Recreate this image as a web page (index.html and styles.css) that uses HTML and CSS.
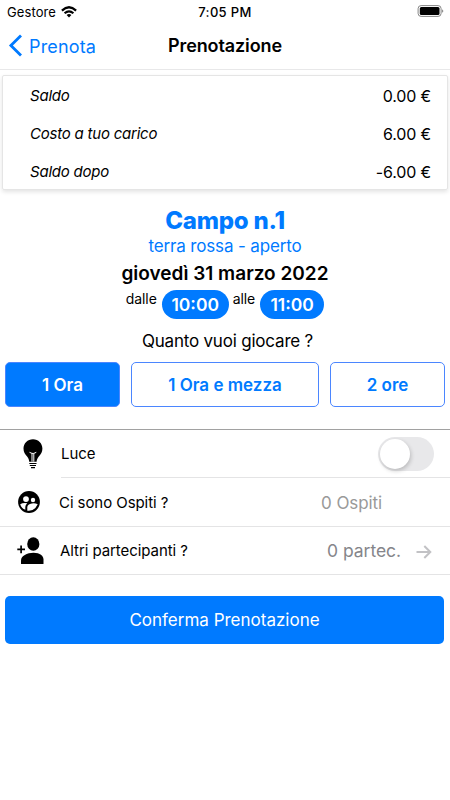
FILE: index.html
```html
<!DOCTYPE html>
<html lang="it">
<head>
<meta charset="utf-8">
<title>Prenotazione</title>
<link rel="stylesheet" href="styles.css">
</head>
<body>
<div class="status">
  <div class="carrier"><span>Gestore</span>
    <svg width="16" height="12" viewBox="0 0 16 12"><g fill="none" stroke="#000" stroke-width="2.2"><path d="M.9 4.6Q8-2.1 15.1 4.6"/><path d="M3.6 7.3Q8 3.3 12.4 7.3"/></g><path d="M5.6 9Q8 7.1 10.4 9L8 11.5Z"/></svg>
  </div>
  <div class="clock">7:05 PM</div>
  <div class="battery">
    <svg width="27" height="12" viewBox="0 0 27 12"><rect x="1.1" y=".6" width="23" height="10.8" rx="3" fill="#fff" stroke="#858585"/><rect x="2.8" y="2" width="19.7" height="8" rx="1.5"/><path d="M25.2 4.2Q27.4 6 25.2 7.8Z" fill="#777"/></svg>
  </div>
</div>
<header class="nav">
  <a class="back"><svg width="14" height="23" viewBox="0 0 14 23"><path d="M13 1.4 2.9 11.5 13 21.6" fill="none" stroke="#007aff" stroke-width="2.8"/></svg><span>Prenota</span></a>
  <h1>Prenotazione</h1>
</header>
<section class="card">
  <div class="line"><i>Saldo</i><span>0.00 €</span></div>
  <div class="line"><i>Costo a tuo carico</i><span>6.00 €</span></div>
  <div class="line"><i>Saldo dopo</i><span>-6.00 €</span></div>
</section>
<section class="booking">
  <h2>Campo n.1</h2>
  <div class="surface">terra rossa - aperto</div>
  <div class="date">giovedì 31 marzo 2022</div>
  <div class="times"><span>dalle</span><b class="from">10:00</b><span>alle</span><b class="to">11:00</b></div>
  <div class="question">Quanto vuoi giocare ?</div>
</section>
<div class="durations">
  <button class="active">1 Ora</button><button>1 Ora e mezza</button><button>2 ore</button>
</div>
<section class="options">
  <div class="row light">
    <div class="icon"><svg width="20" height="30" viewBox="0 0 20 30"><path d="M10 .2C4.600.2.5 4.300.5 9.500.5 13 2 15.300 4.100 17.400 5.500 18.900 6 20.500 6.200 22.700H13.600C13.800 20.500 14.500 18.900 15.800 17.400 17.900 15.300 19.400 13 19.400 9.500 19.400 4.300 15.300.2 10 .2Z"/><path d="M6.500 13.300 9 14.400V22.700M13.300 13.300 10.800 14.400V22.700M9 14.400H10.800" fill="none" stroke="#fff" stroke-width="1"/><path d="M6.300 24.500H13.500M6.800 26.500H13M8 28.600H12" stroke="#000" stroke-width="1.200"/></svg></div>
    <div class="body"><span class="label">Luce</span><div class="toggle"><div class="knob"></div></div></div>
  </div>
  <div class="row guests">
    <div class="icon"><svg width="22" height="22" viewBox="0 0 22 22"><circle cx="11" cy="11" r="10.900"/><g fill="#fff"><circle cx="8" cy="8.100" r="2.900"/><circle cx="15" cy="9" r="2.200"/><path d="M2.200 13.200Q5 11.600 9.300 12.300 7.300 13.800 7.300 16V18.800Q3.500 17.300 2.200 13.200Z"/><path d="M19.700 13.300Q17 11.900 13.800 12.500 9.600 13.200 9.300 16V19.700Q16.500 20.600 19.700 13.300Z"/></g></svg></div>
    <div class="body"><span class="label">Ci sono Ospiti ?</span><span class="value">0 Ospiti</span></div>
  </div>
  <div class="row people">
    <div class="icon"><svg width="27" height="28" viewBox="0 0 27 28"><ellipse cx="16.300" cy="7" rx="6.100" ry="6.700"/><path d="M4 26.700V23.500C4 19 10 15.800 16.500 15.800S26.500 19 26.500 22.500V26.700Q26.500 27 26 27H4.500Q4 27 4 26.700Z"/><path d="M.3 12.400H8M4.100 8.500V16.300" stroke="#000" stroke-width="1.700"/></svg></div>
    <div class="body"><span class="label">Altri partecipanti ?</span><span class="value">0 partec.</span><svg class="arrow" width="16" height="14" viewBox="0 0 16 14"><path d="M.5 7H14.500M8.300 1 14.300 7 8.300 13" fill="none" stroke="#c2c2c5" stroke-width="2"/></svg></div>
  </div>
</section>
<button class="confirm">Conferma Prenotazione</button>
</body>
</html>
```

FILE: styles.css
```css
* { box-sizing: border-box; }
body { margin: 0; width: 450px; height: 800px; overflow: hidden; background: #fff; color: #000; font-family: Inter, "Liberation Sans", sans-serif; font-weight: 400; }
svg { display: block; flex: none; }
button { font-family: inherit; }
h1, h2 { margin: 0; }
.status { height: 23px; display: grid; grid-template-columns: 1fr 1fr 1fr; align-items: center; font-size: 13px; }
.carrier { display: flex; align-items: center; gap: 5px; padding-left: 7px; letter-spacing: .1px; }
.clock { text-align: center; font-weight: 500; letter-spacing: .35px; }
.battery { display: flex; justify-content: flex-end; padding: 0 6px 2px 0; }
.nav { height: 47px; border-bottom: 1px solid #e8e8e9; display: grid; grid-template-columns: 120px 1fr 120px; align-items: center; text-align: center; }
.nav svg { margin-top: -1px; }
.back { display: flex; align-items: center; gap: 7px; padding-left: 8px; color: #007aff; font-size: 18px; letter-spacing: .15px; }
.nav h1 { font-size: 18px; font-weight: 600; white-space: nowrap; padding-bottom: 2px; letter-spacing: -.12px; }
.card { margin: 5px 2px 0; height: 115px; border: 1px solid #e5e5e5; border-radius: 2px; box-shadow: 0 2px 4px rgba(0,0,0,.11); padding: 0 16px 0 27px; }
.line { height: 38px; display: flex; align-items: center; justify-content: space-between; font-size: 16px; }
.line i { font-size: 15px; letter-spacing: -.22px; }
.line span { padding-top: 2px; letter-spacing: -.15px; }
.booking { display: flex; flex-direction: column; align-items: center; padding-top: 16px; white-space: nowrap; }
.booking h2 { color: #007aff; font-size: 24px; line-height: 30px; font-weight: 800; letter-spacing: -.25px; }
.surface { color: #007aff; font-size: 17px; line-height: 20px; letter-spacing: -.15px; }
.date { font-size: 19px; line-height: 34px; font-weight: 600; letter-spacing: 0; padding-top: 1px; margin-bottom: -1px; }
.times { height: 30px; display: flex; font-size: 14px; line-height: 18px; }
.times > span { letter-spacing: -.1px; }
.times b { height: 29px; line-height: 29px; border-radius: 15px; background: #007aff; color: #fff; text-align: center; font-size: 17.500px; font-weight: 600; }
.from { width: 67px; margin: 0 4px 0 5px; }
.to { width: 64px; margin-left: 5px; }
.question { font-size: 17px; line-height: 42px; letter-spacing: -.2px; padding-left: 5px; }
.durations { display: grid; grid-template-columns: 115px 188px 115px; gap: 11px; padding: 0 5px; height: 45px; }
.durations button { border: 1px solid #4b86ff; border-radius: 5px; background: #fff; color: #007aff; font-size: 17px; font-weight: 600; padding: 0; }
.durations .active { background: #007aff; color: #fff; }
.options { margin-top: 22px; border-top: 1px solid #a1a1a1; }
.row { display: flex; height: 48px; }
.icon { width: 61px; display: flex; align-items: center; }
.body { flex: 1; display: flex; align-items: center; }
.label { font-size: 15px; letter-spacing: -.07px; }
.light .icon { padding-left: 22.500px; padding-bottom: 1px; }
.light .body { border-bottom: 1px solid #e4e4e5; justify-content: space-between; padding-right: 16px; }
.guests { height: 49px; border-bottom: 1px solid #e4e4e5; }
.guests .icon, .people .icon { width: 59px; padding-left: 18px; }
.guests .body { padding-top: 1px; }
.people { border-bottom: 1px solid #e4e4e5; }
.people .icon { width: 60px; padding-left: 17px; }
.value { margin-left: auto; font-size: 17px; color: #999; }
.guests .value { margin-right: 68px; letter-spacing: -.1px; }
.people .value { color: #85858a; font-size: 17.500px; letter-spacing: -.05px; }
.arrow { margin: 2px 18px 0 15px; }
.toggle { width: 56px; height: 34px; border-radius: 17px; background: #e8e8ea; padding: 2px; }
.knob { width: 30px; height: 30px; border-radius: 50%; background: #fff; box-shadow: 1px 2px 4px rgba(0,0,0,.2); }
.confirm { display: block; width: 439px; height: 48px; margin: 21px 0 0 5px; border: 0; border-radius: 5px; background: #007aff; color: #fff; font-size: 17px; font-weight: 400; }
```
